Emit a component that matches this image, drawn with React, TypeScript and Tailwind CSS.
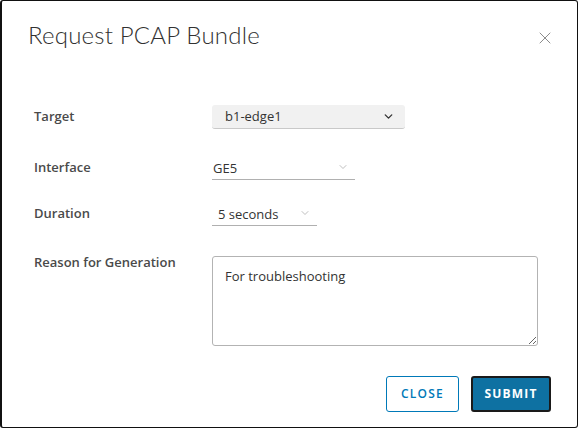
import { ChevronDown, X } from "lucide-react";

const font = { fontFamily: "'Open Sans', Lato, sans-serif" };

function Label({ children }: { children: React.ReactNode }) {
  return <div className="w-[178px] shrink-0 text-[13px] font-semibold text-[#4a4a4a]">{children}</div>;
}

export default function App() {
  return (
    <div style={font} className="h-[428px] w-[578px] overflow-hidden bg-white">
      <div className="flex h-full flex-col rounded-[3px] border border-l-2 border-[#111] bg-white">
        <div className="flex items-start justify-between pl-[26px] pr-[22px] pt-[16px]">
          <h1 style={{ fontFamily: "Lato, sans-serif" }} className="text-[24px] font-light tracking-[0.2px] text-[#313131]">
            Request PCAP Bundle
          </h1>
          <button className="mt-[11px] text-[#8c8c8c]">
            <X size={20} strokeWidth={1.2} />
          </button>
        </div>

        <div className="mt-[52px] flex flex-col pl-[32px]">
          <div className="flex items-center">
            <Label>Target</Label>
            <div className="flex h-[24px] w-[193px] items-center justify-between rounded-[3px] border-b border-[#c9c9c9] bg-[#f1f1f1] pl-[13px] pr-[10px] text-[13px] text-[#333]">
              <span>b1-edge1</span>
              <ChevronDown size={13} strokeWidth={2.5} className="text-[#333]" />
            </div>
          </div>

          <div className="mt-[27px] flex items-center">
            <Label>Interface</Label>
            <div className="flex h-[24px] w-[143px] items-center justify-between border-b border-[#b0b0b0] pl-[1px] pr-[6px] pt-[2px] text-[13px] text-[#333]">
              <span>GE5</span>
              <ChevronDown size={12} strokeWidth={1.5} className="mb-[4px] text-[#aaa]" />
            </div>
          </div>

          <div className="mt-[22px] flex items-center">
            <Label>Duration</Label>
            <div className="flex h-[24px] w-[105px] items-center justify-between border-b border-[#b0b0b0] pl-[6px] pr-[6px] pt-[2px] text-[13px] text-[#333]">
              <span>5 seconds</span>
              <ChevronDown size={12} strokeWidth={1.5} className="mb-[4px] text-[#aaa]" />
            </div>
          </div>

          <div className="mt-[30px] flex items-start">
            <div className="-mt-[3px]">
              <Label>Reason for Generation</Label>
            </div>
            <textarea
              defaultValue="For troubleshooting"
              style={font}
              className="h-[90px] w-[326px] resize rounded-[3px] border border-[#b3b3b3] px-[12px] py-[10px] text-[13px] text-[#333] outline-none"
            />
          </div>
        </div>

        <div className="mt-[30px] flex justify-end gap-[12px] pr-[26px]">
          <button className="h-[36px] w-[73px] rounded-[3px] border border-[#0079b8] text-[12px] font-semibold tracking-[1.2px] text-[#0079b8]">
            CLOSE
          </button>
          <button className="h-[36px] w-[80px] rounded-[3px] border-2 border-[#1a1a1a] bg-[#0e71a2] text-[12px] font-bold tracking-[1.2px] text-white">
            SUBMIT
          </button>
        </div>
      </div>
    </div>
  );
}
